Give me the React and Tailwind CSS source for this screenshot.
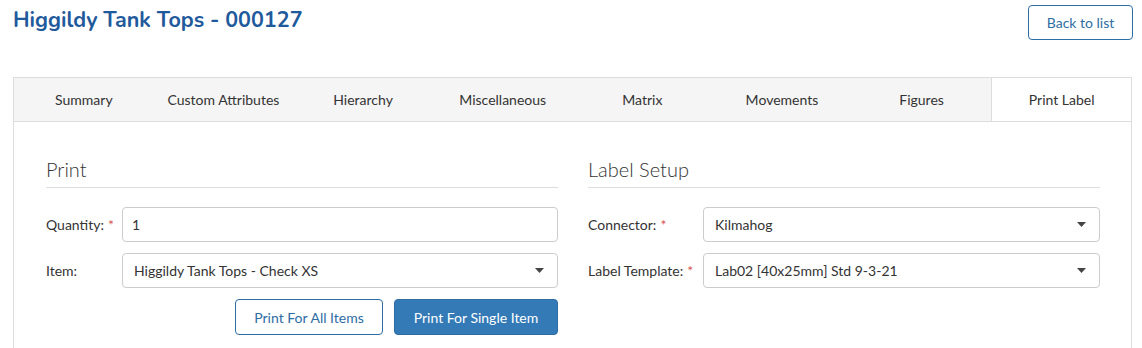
const tabs = ['Summary', 'Custom Attributes', 'Hierarchy', 'Miscellaneous', 'Matrix', 'Movements', 'Figures', 'Print Label'];

function Caret() {
  return (
    <svg width="9" height="5" viewBox="0 0 9 5" className="text-[#444]">
      <path d="M0 0h9L4.5 5z" fill="currentColor" />
    </svg>
  );
}

function Field({ label, required, labelWidth, children }) {
  return (
    <div className="flex items-center">
      <div className={`${labelWidth} shrink-0 text-[14px] text-[#333]`}>
        {label}
        {required && <span className="ml-1 text-[#d9534f]">*</span>}
      </div>
      {children}
    </div>
  );
}

function Select({ value }) {
  return (
    <div className="flex h-[35px] flex-1 items-center justify-between rounded-[4px] border border-[#ccc] bg-white pl-[11px] pr-[13px] text-[14px] text-[#333]">
      <span>{value}</span>
      <Caret />
    </div>
  );
}

export default function App() {
  return (
    <div className="h-[348px] overflow-hidden bg-white font-['Segoe_UI','Lato',sans-serif] text-[#333]">
      <div className="flex items-start justify-between pl-[13px] pr-[9px] pt-[5px]">
        <h1 className="mt-[1px] font-['Nunito','Lato',sans-serif] text-[21.5px] font-bold leading-[28px] text-[#1f5a9c]">
          Higgildy Tank Tops - 000127
        </h1>
        <button className="h-[35px] w-[105px] rounded-[4px] border border-[#2e6da4] bg-white text-[14px] text-[#2e6da4]">
          Back to list
        </button>
      </div>

      <div className="ml-[13px] mr-[10px] mt-[37px] border border-[#ddd]">
        <div className="grid grid-cols-8 border-b border-[#ddd] bg-[#f5f5f5]">
          {tabs.map((t, i) => (
            <div
              key={t}
              className={`flex h-[43px] items-center justify-center text-[14px] text-[#333] ${
                i === tabs.length - 1 ? '-mb-px border-l border-[#ddd] bg-white' : ''
              }`}
            >
              {t}
            </div>
          ))}
        </div>

        <div className="grid grid-cols-2 gap-[30px] pl-[32px] pr-[31px] pt-[36px] pb-[20px]">
          <div>
            <h2 className="border-b border-[#ddd] pb-[7px] text-[20px] font-light leading-[22px]">Print</h2>
            <div className="mt-[19px] flex flex-col gap-[11px]">
              <Field label="Quantity:" required labelWidth="w-[76px]">
                <div className="flex h-[35px] flex-1 items-center rounded-[4px] border border-[#ccc] px-[9px] text-[14px]">1</div>
              </Field>
              <Field label="Item:" labelWidth="w-[76px]">
                <Select value="Higgildy Tank Tops - Check XS" />
              </Field>
              <div className="flex justify-end gap-[11px]">
                <button className="h-[36px] w-[148px] rounded-[4px] border border-[#2e6da4] bg-white text-[14px] text-[#2e6da4]">
                  Print For All Items
                </button>
                <button className="h-[36px] w-[164px] rounded-[4px] border border-[#2e6da4] bg-[#337ab7] text-[14px] text-white">
                  Print For Single Item
                </button>
              </div>
            </div>
          </div>

          <div>
            <h2 className="border-b border-[#ddd] pb-[7px] text-[20px] font-light leading-[22px]">Label Setup</h2>
            <div className="mt-[19px] flex flex-col gap-[11px]">
              <Field label="Connector:" required labelWidth="w-[115px]">
                <Select value="Kilmahog" />
              </Field>
              <Field label="Label Template:" required labelWidth="w-[115px]">
                <Select value="Lab02 [40x25mm] Std 9-3-21" />
              </Field>
            </div>
          </div>
        </div>
      </div>
    </div>
  );
}
